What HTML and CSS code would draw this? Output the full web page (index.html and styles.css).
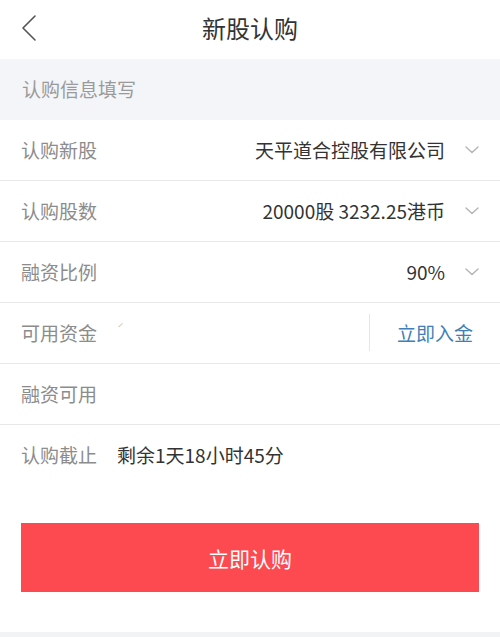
FILE: index.html
```html
<!DOCTYPE html>
<html lang="zh-CN">
<head>
<meta charset="utf-8">
<title>新股认购</title>
<link rel="stylesheet" href="styles.css">
</head>
<body>
<div class="page">
  <header class="topbar">
    <div class="back">
      <svg width="18" height="28" viewBox="0 0 18 28"><path d="M15 2 L3 14 L15 26" fill="none" stroke="#555" stroke-width="1.6" stroke-linecap="round" stroke-linejoin="round"/></svg>
    </div>
    <h1 class="title">新股认购</h1>
    <div></div>
  </header>

  <div class="section">认购信息填写</div>

  <div class="row">
    <span class="label">认购新股</span>
    <span class="value">天平道合控股有限公司</span>
    <svg class="chev" width="14" height="8" viewBox="0 0 14 8"><path d="M1 1 L7 6.5 L13 1" fill="none" stroke="#b4b4b4" stroke-width="1.4" stroke-linecap="round" stroke-linejoin="round"/></svg>
  </div>
  <div class="row">
    <span class="label">认购股数</span>
    <span class="value">20000股 3232.25港币</span>
    <svg class="chev" width="14" height="8" viewBox="0 0 14 8"><path d="M1 1 L7 6.5 L13 1" fill="none" stroke="#b4b4b4" stroke-width="1.4" stroke-linecap="round" stroke-linejoin="round"/></svg>
  </div>
  <div class="row">
    <span class="label">融资比例</span>
    <span class="value">90%</span>
    <svg class="chev" width="14" height="8" viewBox="0 0 14 8"><path d="M1 1 L7 6.5 L13 1" fill="none" stroke="#b4b4b4" stroke-width="1.4" stroke-linecap="round" stroke-linejoin="round"/></svg>
  </div>
  <div class="row">
    <span class="label">可用资金</span>
    <span class="faint">ˊ</span>
    <span class="sep"></span>
    <span class="link">立即入金</span>
  </div>
  <div class="row">
    <span class="label">融资可用</span>
  </div>
  <div class="row last">
    <span class="label">认购截止</span>
    <span class="deadline">剩余1天18小时45分</span>
  </div>

  <div class="btnwrap">
    <button class="submit">立即认购</button>
  </div>
  <div class="bottom"></div>
</div>
</body>
</html>
```

FILE: styles.css
```css
* { box-sizing: border-box; }
html, body { margin: 0; padding: 0; }
body {
  background: #ffffff;
  font-family: "Noto Sans CJK SC", "Noto Sans", sans-serif;
  width: 500px;
  height: 637px;
  overflow: hidden;
}
.page { display: flex; flex-direction: column; height: 637px; }
.topbar {
  height: 59px;
  display: grid;
  grid-template-columns: 1fr auto 1fr;
  align-items: center;
  padding: 0 20px 3px;
}
.back { display: flex; align-items: center; }
.title {
  margin: 0;
  font-size: 24px;
  font-weight: 400;
  color: #333;
  line-height: 1;
}
.section {
  height: 61px;
  background: #f3f5f8;
  display: flex;
  align-items: center;
  padding-left: 22px;
  padding-bottom: 2px;
  font-size: 19px;
  color: #9a9a9a;
}
.row {
  height: 61px;
  border-bottom: 1px solid #e8e8e8;
  display: flex;
  align-items: center;
  padding: 0 21px 2px;
  font-size: 19px;
}
.row.last { border-bottom: none; height: 66px; padding-bottom: 8px; }
.label { color: #8c8c8c; }
.value { margin-left: auto; color: #333; }
.chev { margin-left: 20px; margin-top: 2px; }
.faint { color: #c8c8c8; font-size: 12px; margin-left: 20px; margin-top: -8px; }
.sep {
  margin-left: auto;
  width: 1px;
  height: 37px;
  background: #e6e6e6;
}
.link { color: #3f7fb6; margin-left: 27px; margin-right: 6px; }
.deadline { color: #333; margin-left: 20px; }
.btnwrap { padding: 32px 21px 0; }
.submit {
  width: 100%;
  height: 69px;
  border: none;
  background: #fd4a50;
  color: #fff;
  font-family: "Noto Sans CJK SC", "Noto Sans", sans-serif;
  font-size: 21px;
  display: block;
}
.bottom { margin-top: auto; height: 5px; background: #f1f3f4; }
```
